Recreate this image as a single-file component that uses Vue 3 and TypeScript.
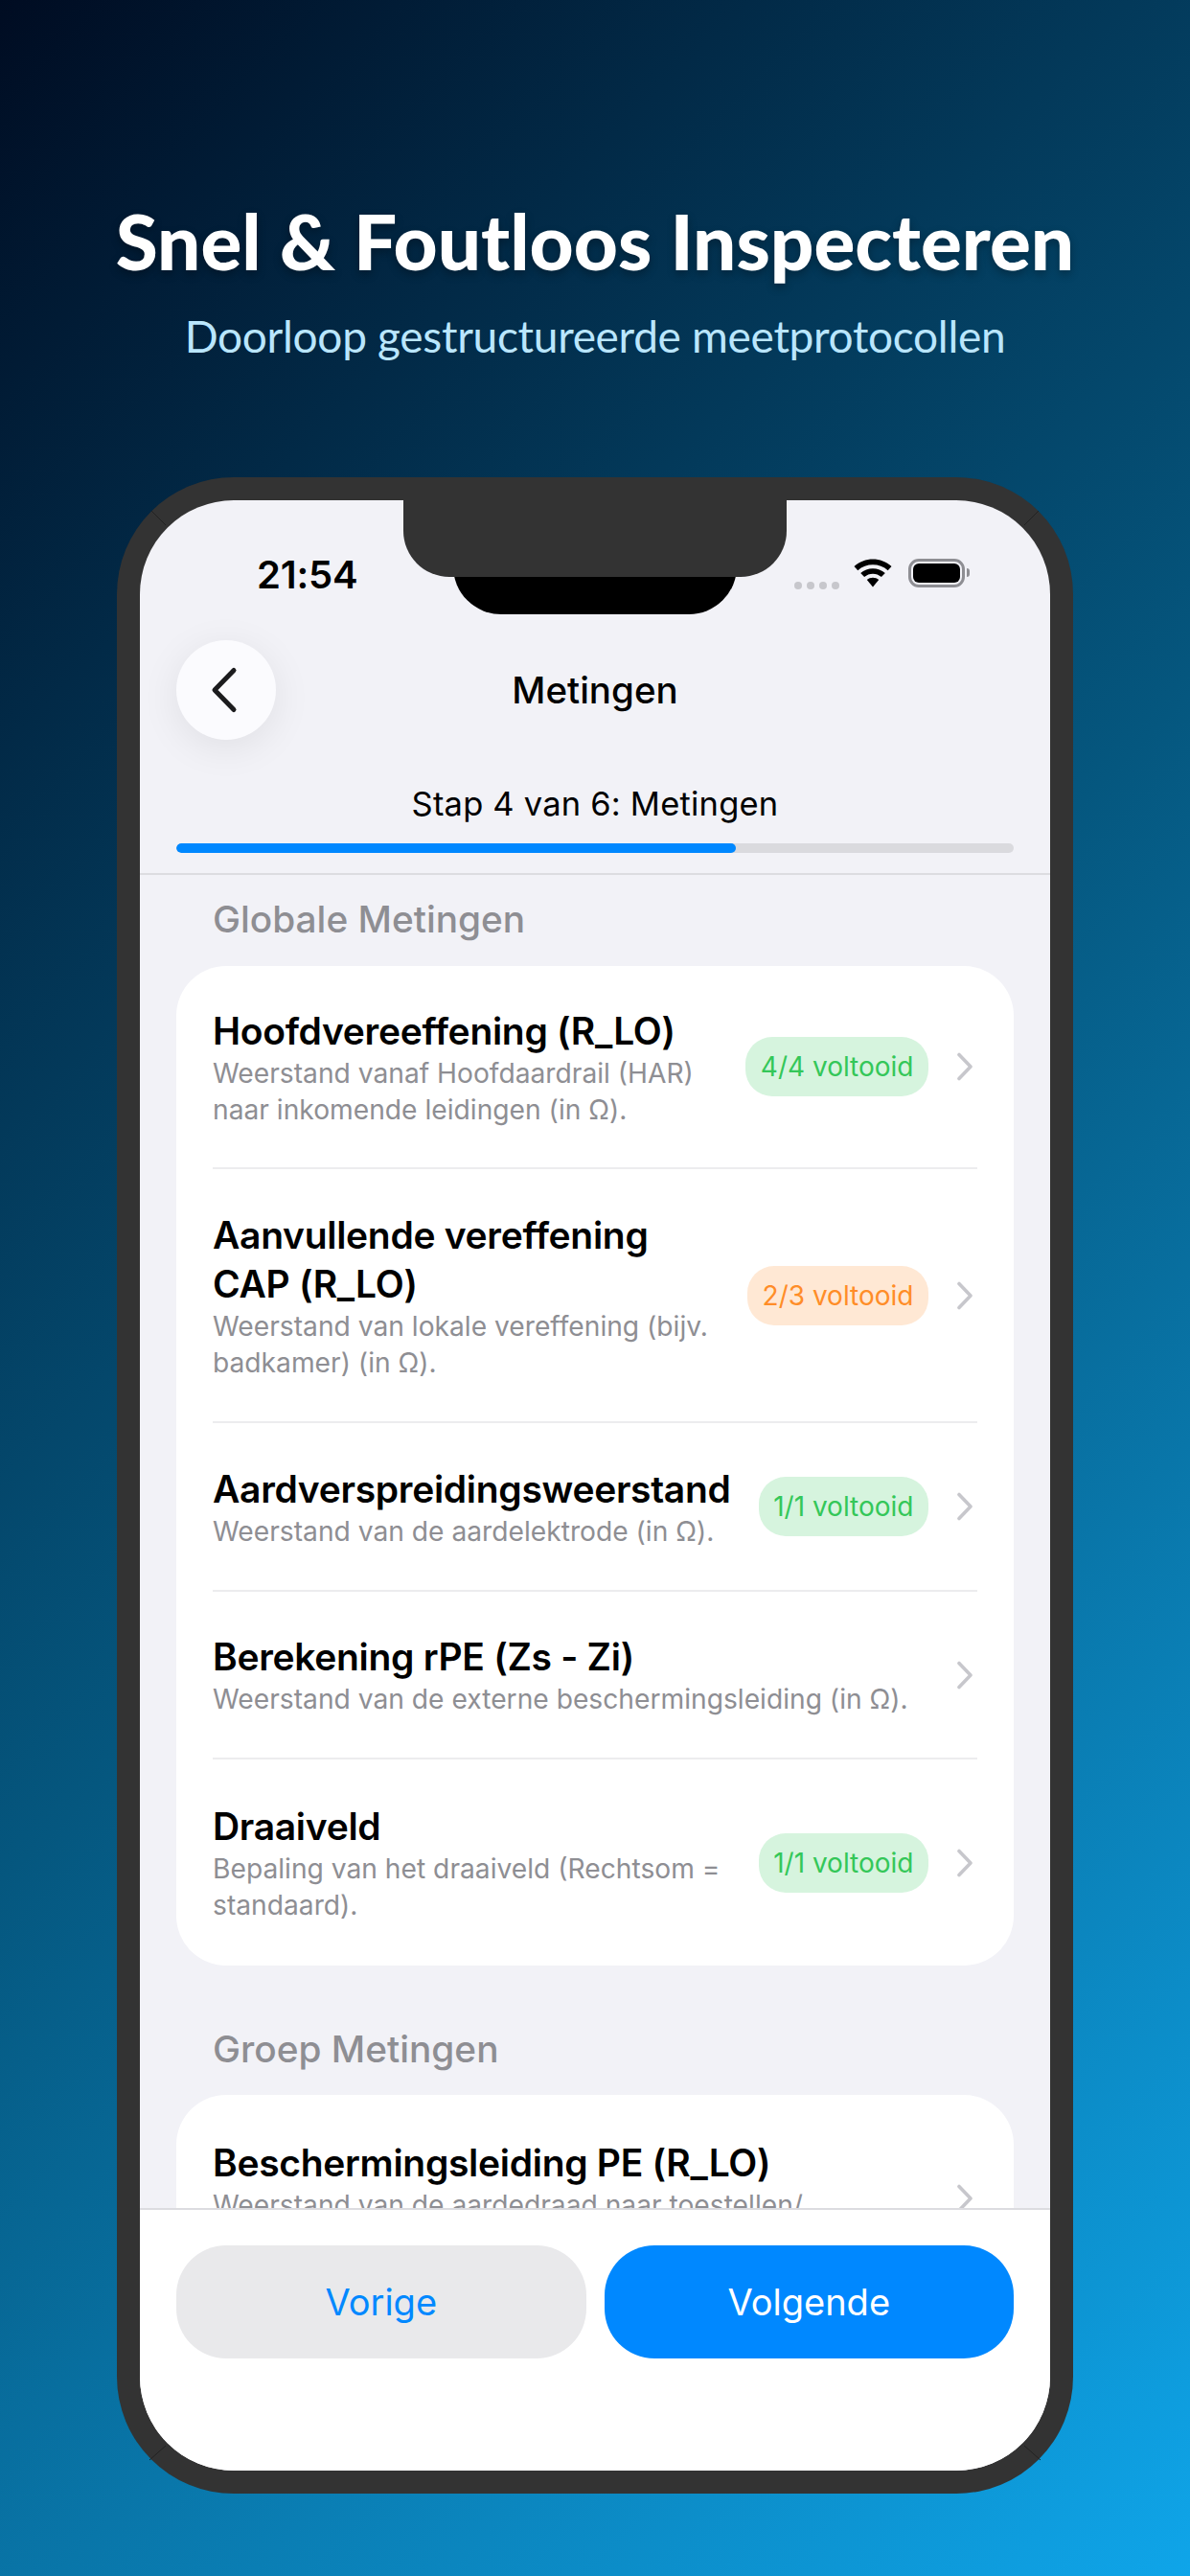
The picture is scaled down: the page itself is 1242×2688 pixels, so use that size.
<script setup lang="ts">
interface Row {
  title: string
  sub: string
  badge?: string
  tone?: 'green' | 'orange'
  cls: string
}
const globalRows: Row[] = [
  { title: 'Hoofdvereeffening (R_LO)', sub: 'Weerstand vanaf Hoofdaardrail (HAR) naar inkomende leidingen (in Ω).', badge: '4/4 voltooid', tone: 'green', cls: 'r1' },
  { title: 'Aanvullende vereffening CAP (R_LO)', sub: 'Weerstand van lokale vereffening (bijv. badkamer) (in Ω).', badge: '2/3 voltooid', tone: 'orange', cls: 'r2' },
  { title: 'Aardverspreidingsweerstand', sub: 'Weerstand van de aardelektrode (in Ω).', badge: '1/1 voltooid', tone: 'green', cls: 'r3' },
  { title: 'Berekening rPE (Zs - Zi)', sub: 'Weerstand van de externe beschermingsleiding (in Ω).', cls: 'r4' },
  { title: 'Draaiveld', sub: 'Bepaling van het draaiveld (Rechtsom = standaard).', badge: '1/1 voltooid', tone: 'green', cls: 'r5' },
]
const groupRows: Row[] = [
  { title: 'Beschermingsleiding PE (R_LO)', sub: 'Weerstand van de aardedraad naar toestellen/ contactdozen (in Ω).', cls: 'r6' },
]
</script>

<template>
  <div class="page">
    <header class="hero">
      <h1>Snel &amp; Foutloos Inspecteren</h1>
      <p>Doorloop gestructureerde meetprotocollen</p>
    </header>

    <div class="phone">
      <div class="notch"></div>
      <div class="camera"></div>
      <svg class="seams" viewBox="0 0 998 2104" width="998" height="2104" aria-hidden="true">
        <path d="M36 35 51 50M962 35 947 50M34 2069 51 2054M964 2069 947 2054" stroke="#222" stroke-width="1" fill="none" />
      </svg>

      <div class="screen">
        <div class="status">
          <span class="time">21:54</span>
          <div class="status-right">
            <div class="dots"><i></i><i></i><i></i><i></i></div>
            <svg class="wifi" viewBox="0 0 40 30" width="40" height="30" aria-hidden="true">
              <path d="M0.5 8.1C11.4-2.1 28.6-2.1 39.5 8.1L35.7 12.2C27 4.3 13 4.3 4.3 12.2Z" />
              <path d="M7.2 15.1C14.2 8.6 25.8 8.6 32.8 15.1L28.9 19.1C23.8 14.6 16.2 14.6 11.1 19.1Z" />
              <path d="M13.8 22C17.2 19 22.8 19 26.2 22L20 29.5Z" />
            </svg>
            <div class="battery"><div class="cell"></div></div>
            <div class="nub"></div>
          </div>
        </div>

        <div class="nav">
          <button class="back" aria-label="Terug">
            <svg viewBox="0 0 32 50" width="32" height="50" aria-hidden="true">
              <path d="M27 4.5 7 25l20 20.5" fill="none" stroke="#1c1c1e" stroke-width="5" stroke-linecap="round" stroke-linejoin="round" />
            </svg>
          </button>
          <h2>Metingen</h2>
        </div>

        <div class="progress">
          <div class="step">Stap 4 van 6: Metingen</div>
          <div class="track"><div class="fill" :style="{ width: (584 / 874) * 100 + '%' }"></div></div>
        </div>

        <div class="scroll">
          <h3 class="section first">Globale Metingen</h3>
          <div class="card">
            <div v-for="r in globalRows" :key="r.title" class="row" :class="r.cls">
              <div class="txt">
                <div class="t">{{ r.title }}</div>
                <div class="s">{{ r.sub }}</div>
              </div>
              <span v-if="r.badge" class="badge" :class="r.tone">{{ r.badge }}</span>
              <svg class="chev" viewBox="0 0 18 30" width="18" height="30" aria-hidden="true">
                <path d="M3 2.5 15 15 3 27.5" fill="none" stroke="#c7c7cc" stroke-width="3.6" stroke-linecap="round" stroke-linejoin="round" />
              </svg>
            </div>
          </div>
          <h3 class="section">Groep Metingen</h3>
          <div class="card">
            <div v-for="r in groupRows" :key="r.title" class="row" :class="r.cls">
              <div class="txt">
                <div class="t">{{ r.title }}</div>
                <div class="s">{{ r.sub }}</div>
              </div>
              <svg class="chev" viewBox="0 0 18 30" width="18" height="30" aria-hidden="true">
                <path d="M3 2.5 15 15 3 27.5" fill="none" stroke="#c7c7cc" stroke-width="3.6" stroke-linecap="round" stroke-linejoin="round" />
              </svg>
            </div>
          </div>
        </div>

        <footer class="foot">
          <button class="btn ghost">Vorige</button>
          <button class="btn primary">Volgende</button>
        </footer>
      </div>
    </div>
  </div>
</template>

<style>
html, body { margin: 0; padding: 0; }
</style>

<style scoped>
* { box-sizing: border-box; }
.page {
  width: 1242px;
  height: 2688px;
  overflow: hidden;
  background: linear-gradient(135deg, #000c22 0%, #05577f 50%, #0fa5e9 100%);
  font-family: Inter, "Liberation Sans", sans-serif;
  display: flex;
  flex-direction: column;
  align-items: center;
  padding-top: 201px;
}
.hero { text-align: center; height: 297px; }
.hero h1 {
  margin: 0;
  font-family: Lato, "Open Sans", sans-serif;
  font-weight: 900;
  font-size: 80px;
  line-height: 100px;
  color: #fff;
  text-shadow: 0 4px 10px rgba(0, 0, 0, 0.3);
}
.hero p {
  margin: 20px 0 0;
  font-family: Lato, "Open Sans", sans-serif;
  font-size: 46px;
  line-height: 60px;
  letter-spacing: -0.3px;
  color: #bae6fd;
}
.phone {
  position: relative;
  width: 998px;
  height: 2104px;
  flex: none;
  background: #333;
  border-radius: 122px;
  padding: 24px;
}
.seams { position: absolute; left: 0; top: 0; z-index: 1; pointer-events: none; }
.notch {
  position: absolute;
  left: 299px;
  top: 24px;
  width: 400px;
  height: 80px;
  background: #333;
  border-radius: 0 0 48px 48px;
  z-index: 3;
}
.camera {
  position: absolute;
  left: 351px;
  top: 90px;
  width: 296px;
  height: 53px;
  background: #000;
  border-radius: 0 0 50px 50px;
  z-index: 2;
}
.screen {
  height: 100%;
  background: #f2f2f7;
  border-radius: 98px;
  overflow: hidden;
  display: flex;
  flex-direction: column;
}
.status {
  height: 146px;
  flex: none;
  display: flex;
  justify-content: space-between;
  padding: 54px 84px 0 122px;
}
.time { font-size: 40px; font-weight: 600; line-height: 48px; color: #000; letter-spacing: -0.2px; }
.status-right { position: relative; display: flex; align-items: flex-start; padding-top: 8px; }
.dots { display: flex; gap: 5px; margin: 23px 15px 0 0; }
.dots i { width: 8px; height: 8px; border-radius: 50%; background: #c7c7cc; display: block; }
.wifi { margin-top: -1px; margin-right: 17px; }
.battery {
  width: 59px;
  height: 30px;
  border: 3px solid #8e8e93;
  border-radius: 11px;
  padding: 2px;
  margin-top: -1px;
}
.cell { height: 100%; background: #000; border-radius: 6px; }
.nub { width: 3px; height: 9px; background: #8e8e93; border-radius: 0 3px 3px 0; margin: 9px 0 0 2px; }
.nav { position: relative; height: 104px; flex: none; display: flex; align-items: center; justify-content: center; }
.nav h2 { margin: 0; font-size: 38.5px; font-weight: 500; color: #000; }
.back {
  position: absolute;
  left: 38px;
  top: 0;
  width: 104px;
  height: 104px;
  border: 0;
  border-radius: 50%;
  padding: 0 6px 0 0;
  background: #fbfbfe;
  box-shadow: 0 8px 40px rgba(0, 0, 0, 0.08);
  display: flex;
  align-items: center;
  justify-content: center;
}
.progress { flex: none; height: 141px; padding: 43px 38px 0; border-bottom: 2px solid #dcdce0; }
.step { font-size: 34.5px; line-height: 48px; letter-spacing: 0.2px; text-align: center; color: #000; height: 65px; }
.track { height: 10px; background: #dadade; border-radius: 5px; overflow: hidden; }
.fill { height: 100%; background: #0088ff; border-radius: 5px; }
.scroll { flex: 1; min-height: 0; overflow: hidden; padding: 0 38px; }
.section {
  margin: 0;
  padding-left: 38px;
  font-size: 38.8px;
  font-weight: 500;
  line-height: 48px;
  color: #8e8e93;
}
.section.first { padding-top: 22px; height: 95px; }
.section:not(.first) { padding-top: 63px; height: 135px; }
.card { background: #fff; border-radius: 52px; padding: 0 38px; }
.row { display: flex; align-items: center; border-bottom: 2px solid #ececee; }
.r1 { height: 212px; }
.r2 { height: 265px; }
.r3 { height: 176px; }
.r4 { height: 175px; }
.r5 { height: 215px; border-bottom: 0; }
.r6 { height: 216px; border-bottom: 0; }
.txt { flex: 1; min-width: 0; padding-right: 20px; }
.t { font-size: 39px; font-weight: 600; line-height: 51px; color: #000; letter-spacing: -0.3px; }
.r2 .t { max-width: 500px; }
.s { font-size: 28.2px; line-height: 38px; color: #8e8e93; }
.badge {
  flex: none;
  height: 62px;
  padding: 0 15.5px;
  border-radius: 28px;
  font-size: 28px;
  line-height: 62px;
  white-space: nowrap;
}
.green { background: #d6f4de; color: #34c759; }
.orange { background: #ffe8d4; color: #ff8d28; }
.chev { flex: none; margin: 0 4px 0 29px; }
.foot {
  height: 274px;
  flex: none;
  background: #fff;
  border-top: 2px solid #dcdce0;
  display: flex;
  gap: 19px;
  padding: 37px 38px 0;
  align-items: flex-start;
}
.btn { flex: 1; height: 118px; border: 0; border-radius: 52px; font-family: inherit; font-size: 38px; }
.ghost { background: #e9e9eb; color: #0088ff; }
.primary { background: #0088ff; color: #fff; }
</style>
